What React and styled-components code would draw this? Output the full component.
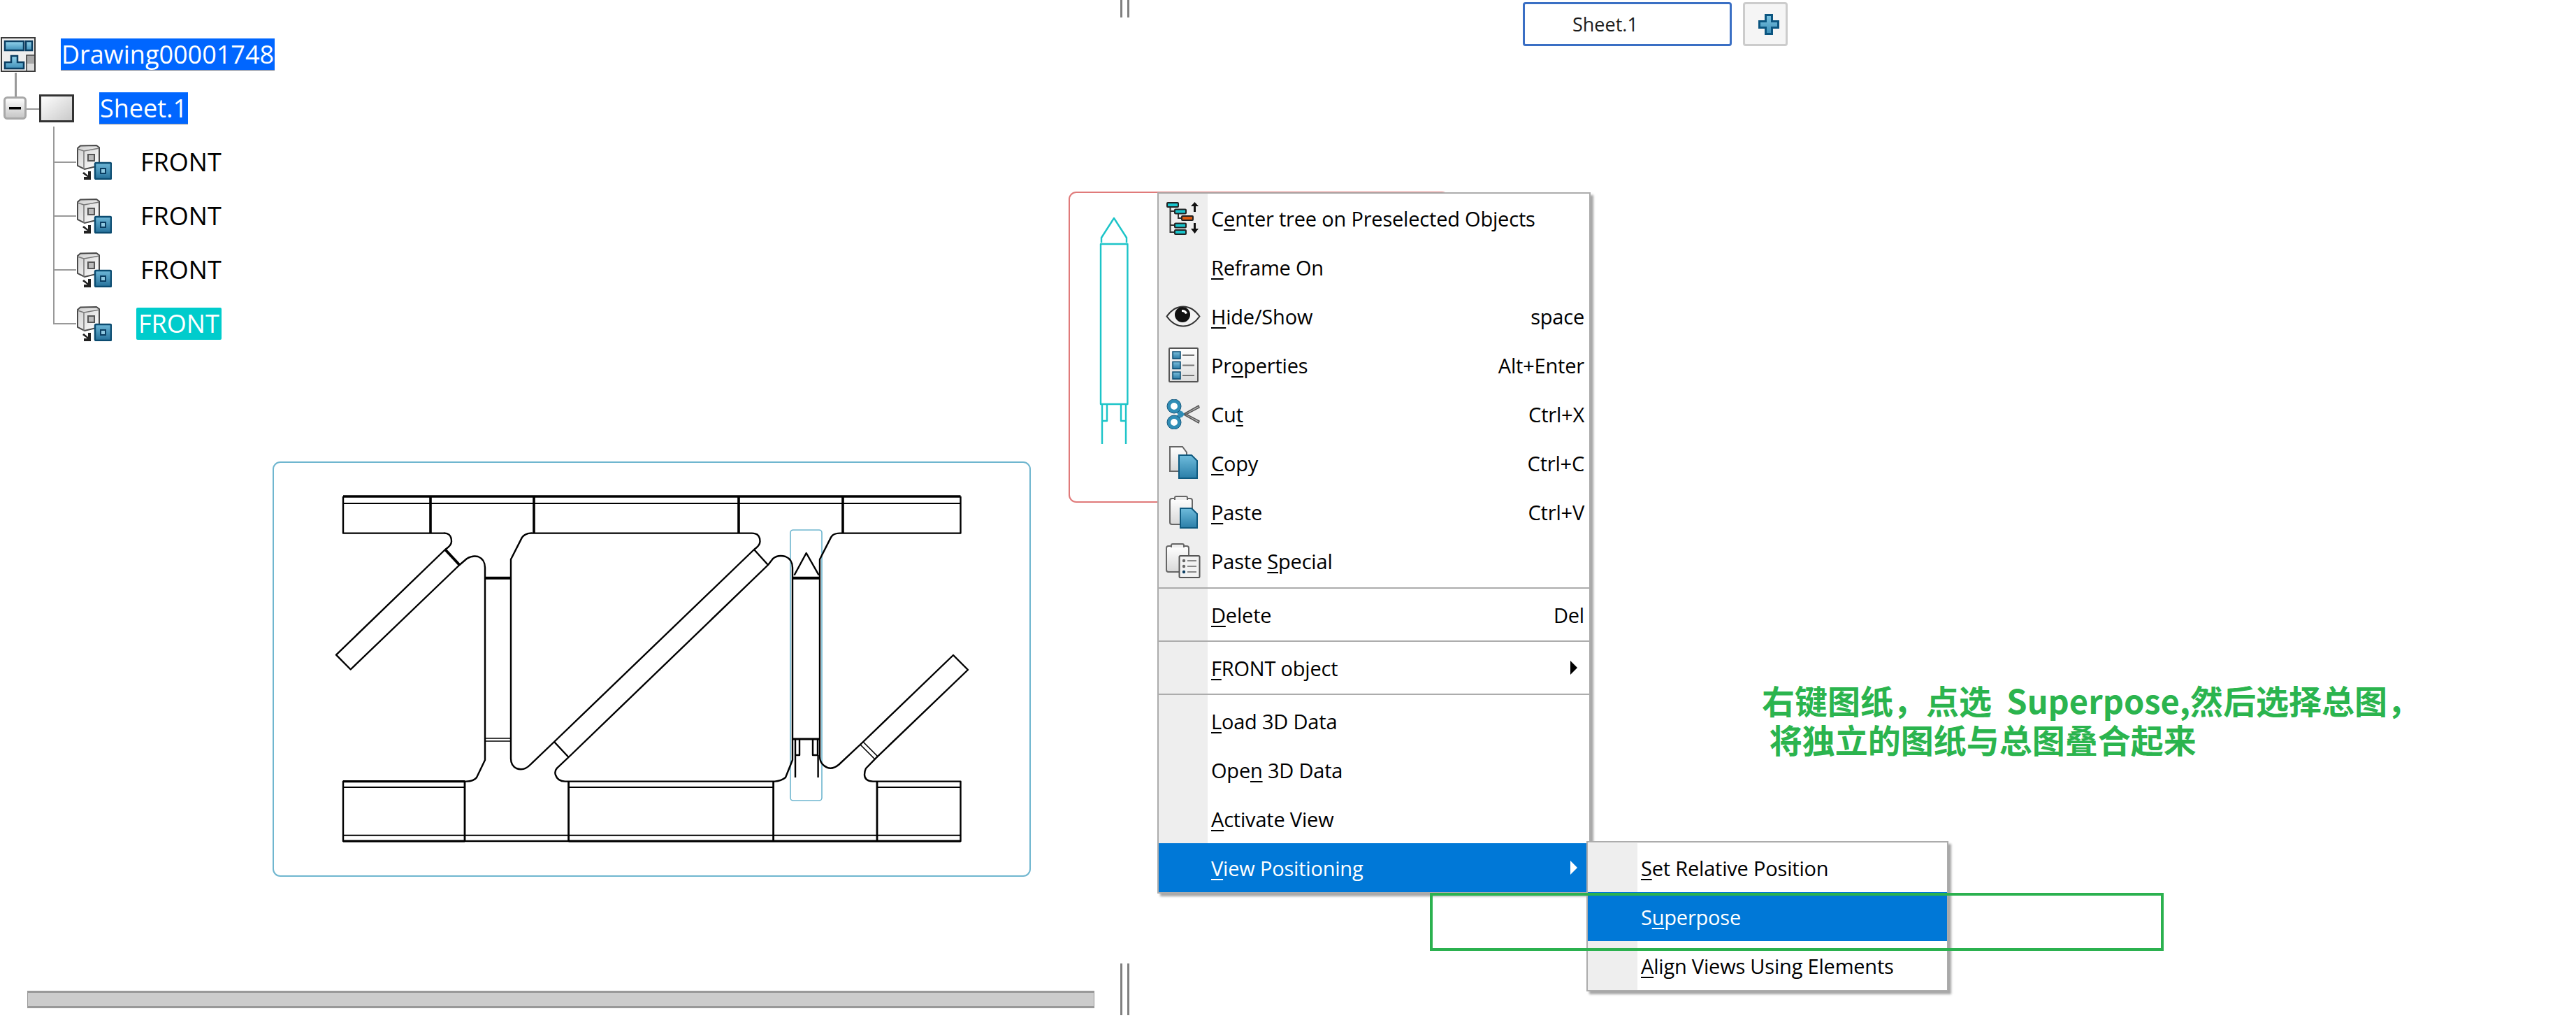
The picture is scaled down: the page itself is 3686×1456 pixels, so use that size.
import React from "react";
import styled, { createGlobalStyle } from "styled-components";

const Global = createGlobalStyle`
  html, body { margin: 0; padding: 0; background: #fff; }
  #root { width: 3686px; height: 1456px; }
`;

const Page = styled.div`
  position: relative;
  width: 3686px;
  height: 1456px;
  overflow: hidden;
  display: grid;
  grid-template-columns: 1603px 13px 1fr;
  font-family: "Open Sans", "Noto Sans", sans-serif;
  background: #fff;
  color: #000;
`;

const LeftPane = styled.section`
  display: flex;
  flex-direction: column;
  justify-content: space-between;
`;

const Tree = styled.div`
  position: relative;
  display: flex;
  flex-direction: column;
  padding-top: 39px;
`;

const TreeRow = styled.div`
  position: relative;
  display: flex;
  align-items: center;
  height: 77px;
  padding-left: ${(p) => p.$indent}px;
  gap: ${(p) => p.$gap}px;
`;

const Stem = styled.span`
  position: absolute;
  background: #999;
  left: ${(p) => p.$x}px;
  top: ${(p) => p.$y}px;
  width: ${(p) => p.$w}px;
  height: ${(p) => p.$h}px;
`;

const Label = styled.span`
  font-size: 36px;
  line-height: 46px;
  height: 46px;
  padding: 0 ${(p) => p.$pad || 1}px;
  white-space: nowrap;
  color: ${(p) => (p.$bg ? "#fff" : "#000")};
  background: ${(p) => p.$bg || "transparent"};
  border-radius: ${(p) => (p.$round ? "2px" : "0")};
  box-shadow: ${(p) => (p.$bg && !p.$round ? "inset 0 -1px 0 #8a8f9a" : "none")};
`;

const ScrollBar = styled.div`
  height: 19px;
  margin: 0 37px 14px 39px;
  background: #ccc;
  border-top: 3px solid #999;
  border-bottom: 3px solid #999;
  box-shadow: inset 1px 0 0 #999, inset -1px 0 0 #999;
`;

const Splitter = styled.div`
  display: flex;
  flex-direction: column;
  justify-content: space-between;
  padding-bottom: 4px;
`;

const Grip = styled.div`
  width: 13px;
  height: ${(p) => p.$h}px;
  box-sizing: border-box;
  border-left: 3px solid #808080;
  border-right: 3px solid #808080;
`;

const RightPane = styled.section`
  display: flex;
  align-items: flex-start;
  gap: 16px;
  padding: 3px 0 0 563px;
`;

const Tab = styled.div`
  box-sizing: border-box;
  width: 299px;
  height: 63px;
  border: 3px solid #3a6fc4;
  border-radius: 4px;
  padding-left: 68px;
  font-size: 27px;
  line-height: 57px;
  color: #1c1c1c;
`;

const AddButton = styled.div`
  box-sizing: border-box;
  width: 64px;
  height: 63px;
  border: 3px solid #ccc;
  border-radius: 4px;
  background: #f5f5f5;
  display: flex;
  align-items: center;
  justify-content: center;
  padding-left: 9px;
`;

const View = styled.div`
  position: absolute;
  box-sizing: border-box;
  left: ${(p) => p.$x}px;
  top: ${(p) => p.$y}px;
  width: ${(p) => p.$w}px;
  height: ${(p) => p.$h}px;
  border: 2px solid ${(p) => p.$color};
  border-radius: 11px;
  svg { position: absolute; left: -2px; top: -2px; display: block; }
`;

const Menu = styled.div`
  position: absolute;
  box-sizing: border-box;
  left: ${(p) => p.$x}px;
  top: ${(p) => p.$y}px;
  width: ${(p) => p.$w}px;
  padding-top: ${(p) => p.$pad}px;
  background: #fff;
  border: 2px solid #acacac;
  box-shadow: 4px 4px 3px rgba(0, 0, 0, 0.35);
  font-size: 29px;
`;

const Row = styled.div`
  display: grid;
  grid-template-columns: ${(p) => p.$gutter}px 1fr auto;
  height: 70px;
  align-items: stretch;
  color: ${(p) => (p.$active ? "#fff" : "#000")};
  background: ${(p) => (p.$active ? "#0078d7" : "transparent")};
`;

const Gutter = styled.span`
  display: flex;
  align-items: center;
  justify-content: center;
  background: ${(p) => (p.$active ? "transparent" : "#eee")};
`;

const RowText = styled.span`
  display: flex;
  align-items: center;
  padding-left: 5px;
  white-space: pre;
  letter-spacing: -0.2px;
  u { text-underline-offset: 4px; text-decoration-thickness: 2px; }
`;

const Shortcut = styled.span`
  display: flex;
  align-items: center;
  padding-right: 7px;
  letter-spacing: -0.2px;
`;

const Arrow = styled.span`
  align-self: center;
  margin-right: 17px;
  width: 0;
  height: 0;
  border-top: 10px solid transparent;
  border-bottom: 10px solid transparent;
  border-left: 10px solid ${(p) => (p.$active ? "#fff" : "#000")};
`;

const Separator = styled.div`
  position: relative;
  height: ${(p) => p.$h}px;
  background: linear-gradient(to right, #eee 70px, #fff 70px);
  &::after {
    content: "";
    position: absolute;
    left: 0;
    right: 0;
    top: ${(p) => p.$line}px;
    height: 2px;
    background: #acacac;
  }
`;

const Highlight = styled.div`
  position: absolute;
  left: 2046px;
  top: 1277px;
  width: 1042px;
  height: 75px;
  border: 4px solid #2bb14f;
  box-sizing: content-box;
`;

const Callout = styled.div`
  position: absolute;
  left: 2521px;
  top: 973px;
  font-family: "Noto Sans CJK SC", "Noto Sans", sans-serif;
  font-weight: 700;
  font-size: 47px;
  line-height: 56px;
  color: #2bb44e;
  white-space: pre;
`;

const Grad = ({ id, from, to, diag }) => (
  <linearGradient id={id} x1="0" y1="0" x2={diag ? "1" : "0"} y2="1">
    <stop offset="0" stopColor={from} />
    <stop offset="1" stopColor={to} />
  </linearGradient>
);

const DrawingIcon = () => (
  <svg width="50" height="50" viewBox="0 0 50 50">
    <defs>
      <Grad id="dBlue" from="#96d6ee" to="#3f8fb8" />
    </defs>
    <rect x="1" y="1" width="48" height="48" fill="#eeeeee" stroke="#3a3a3a" strokeWidth="2" />
    <rect x="6" y="6" width="27" height="13" fill="url(#dBlue)" stroke="#0b3e62" strokeWidth="2.5" />
    <rect x="36" y="6" width="9" height="13" fill="url(#dBlue)" stroke="#0b3e62" strokeWidth="2.5" />
    <path d="M15 27H24V36H33V45H6V36H15Z" fill="url(#dBlue)" stroke="#0b3e62" strokeWidth="2.5" />
    <rect x="37" y="27" width="11" height="11" fill="#a8a8a8" />
    <rect x="37" y="38" width="11" height="10" fill="#dcdcdc" />
    <path d="M37 48V26H48" fill="none" stroke="#333" strokeWidth="1.5" />
  </svg>
);

const SheetIcon = () => (
  <svg width="50" height="40" viewBox="0 0 50 40">
    <defs>
      <Grad id="sFill" from="#ffffff" to="#c8c8c8" diag />
    </defs>
    <rect x="1.5" y="1.5" width="47" height="37" fill="url(#sFill)" stroke="#333" strokeWidth="3" />
  </svg>
);

const ExpandIcon = () => (
  <svg width="33" height="33" viewBox="0 0 33 33">
    <defs>
      <Grad id="eFill" from="#ffffff" to="#c4c4c4" />
    </defs>
    <rect x="1.5" y="1.5" width="30" height="30" rx="4" fill="url(#eFill)" stroke="#a8a8a8" strokeWidth="3" />
    <rect x="8" y="15" width="17" height="3.5" fill="#000" />
  </svg>
);

const ViewIcon = () => (
  <svg width="50" height="50" viewBox="0 0 50 50">
    <defs>
      <Grad id="vBody" from="#cfcfcf" to="#ffffff" diag />
      <Grad id="vBlue" from="#6fb8d8" to="#25709a" />
    </defs>
    <path d="M1 5L5 1.5L28 1L32 4V30L11 35L1 30Z" fill="url(#vBody)" stroke="#4a4a4a" strokeWidth="2" />
    <path d="M1 6L10 9L32 5M10 9V35" fill="none" stroke="#777" strokeWidth="1.5" />
    <rect x="16" y="14" width="9" height="9" fill="#bbb" stroke="#555" strokeWidth="2" />
    <path d="M10 39L16 44V38H20V50H10V46H15L8 41Z" fill="#222" />
    <rect x="26" y="26" width="23" height="23" rx="1.5" fill="url(#vBlue)" stroke="#0b4b70" strokeWidth="2.5" />
    <rect x="34" y="34" width="7" height="7" fill="#8fc8e0" stroke="#0b3e62" strokeWidth="2" />
  </svg>
);

const NodeBox = ({ x, y, fill, w = 16, h = 6 }) => (
  <rect x={x} y={y} width={w} height={h} rx="1" fill={fill} stroke="#222" strokeWidth="2" />
);

const TreeIcon = () => (
  <svg width="48" height="48" viewBox="0 0 48 48">
    <path d="M5.5 8V44H12M5.5 14H12M5.5 34H12M17 18V24H22" fill="none" stroke="#333" strokeWidth="2" />
    <NodeBox x="1" y="2" fill="#18c4cc" />
    <NodeBox x="12" y="11.5" fill="#18c4cc" />
    <NodeBox x="22" y="21" fill="#dc5a10" />
    <NodeBox x="12" y="31.5" fill="#18c4cc" />
    <NodeBox x="12" y="41" fill="#18c4cc" />
    <path d="M40.5 1L46 7H42V15H39V7H35Z" fill="#111" />
    <path d="M40.5 46L46 39H42V31H39V39H35Z" fill="#111" />
  </svg>
);

const EyeIcon = () => (
  <svg width="50" height="31" viewBox="0 0 50 31">
    <path d="M1.5 15.5C9 5 17 1.5 25 1.5S41 5 48.5 15.5C41 26 33 29.5 25 29.5S9 26 1.5 15.5Z" fill="#f2f2f2" stroke="#333" strokeWidth="2" />
    <circle cx="24" cy="13" r="11" fill="#111" />
    <path d="M23 6A8 8 0 0 1 31 11L28 12A5 5 0 0 0 23 9Z" fill="#fff" />
  </svg>
);

const PropsIcon = () => (
  <svg width="43" height="50" viewBox="0 0 43 50">
    <defs>
      <Grad id="pFill" from="#ffffff" to="#dcdcdc" />
      <Grad id="pBlue" from="#7cc0de" to="#2a7aa4" />
    </defs>
    <rect x="1" y="1" width="41" height="48" rx="1" fill="url(#pFill)" stroke="#555" strokeWidth="2" />
    {[6, 20.5, 35].map((y) => (
      <g key={y}>
        <rect x="6" y={y} width="11" height="10" fill="url(#pBlue)" stroke="#0b4b70" strokeWidth="1.5" />
        <path d={`M20 ${y + 5}H37`} stroke="#777" strokeWidth="2" />
      </g>
    ))}
  </svg>
);

const ScissorsIcon = () => (
  <svg width="48" height="43" viewBox="0 0 48 43">
    <path d="M25 21L46 9L47 12L28 22Z" fill="#bbb" stroke="#555" strokeWidth="1.5" />
    <path d="M25 22L46 34L47 31L28 21Z" fill="#bbb" stroke="#555" strokeWidth="1.5" />
    <path d="M24 24L12 13M24 19L12 30" stroke="#2f8db6" strokeWidth="6" />
    <circle cx="11" cy="10" r="7.5" fill="#fff" stroke="#2f8db6" strokeWidth="5" />
    <circle cx="11" cy="33" r="7.5" fill="#fff" stroke="#2f8db6" strokeWidth="5" />
    <circle cx="11" cy="10" r="10" fill="none" stroke="#18587c" strokeWidth="1" />
    <circle cx="11" cy="33" r="10" fill="none" stroke="#18587c" strokeWidth="1" />
  </svg>
);

const BlueDoc = ({ x, y, w, h }) => (
  <path
    d={`M${x} ${y}H${x + w - 8}L${x + w} ${y + 8}V${y + h}H${x}Z`}
    fill="url(#docBlue)"
    stroke="#0f5a80"
    strokeWidth="2"
  />
);

const CopyIcon = () => (
  <svg width="41" height="48" viewBox="0 0 41 48">
    <defs>
      <Grad id="docBlue" from="#6fbcdc" to="#2a7ea8" />
      <Grad id="docGrey" from="#ffffff" to="#d8d8d8" />
    </defs>
    <path d="M1 1H19L25 9V36H1Z" fill="url(#docGrey)" stroke="#666" strokeWidth="2" />
    <BlueDoc x={14} y={13} w={26} h={33} />
  </svg>
);

const PasteIcon = () => (
  <svg width="41" height="47" viewBox="0 0 41 47">
    <defs>
      <Grad id="docGrey" from="#ffffff" to="#d8d8d8" />
    </defs>
    <rect x="1" y="4" width="32" height="37" rx="3" fill="url(#docGrey)" stroke="#666" strokeWidth="2" />
    <path d="M8 6V3Q8 1 10 1H24Q26 1 26 3V6" fill="#eee" stroke="#666" strokeWidth="2" />
    <BlueDoc x={16} y={18} w={24} h={28} />
  </svg>
);

const PasteSpecialIcon = () => (
  <svg width="50" height="50" viewBox="0 0 50 50">
    <defs>
      <Grad id="docGrey" from="#ffffff" to="#d8d8d8" />
    </defs>
    <rect x="1" y="4" width="32" height="37" rx="3" fill="url(#docGrey)" stroke="#666" strokeWidth="2" />
    <path d="M8 6V3Q8 1 10 1H24Q26 1 26 3V6" fill="#eee" stroke="#666" strokeWidth="2" />
    <rect x="19.5" y="18" width="29" height="31" rx="1.5" fill="#f2f2f2" stroke="#555" strokeWidth="2" />
    {[25, 33, 41].map((y, i) => (
      <g key={y}>
        <circle cx="26" cy={y} r="2.2" fill={i === 2 ? "#0b3e62" : "#666"} />
        <path d={`M31 ${y}H44`} stroke="#888" strokeWidth="2" />
      </g>
    ))}
  </svg>
);

const PlusIcon = () => (
  <svg width="30" height="30" viewBox="0 0 30 30">
    <defs>
      <Grad id="plusFill" from="#7cc4e2" to="#3d8fb8" />
    </defs>
    <path d="M10.5 1.5H19.5V10.5H28.5V19.5H19.5V28.5H10.5V19.5H1.5V10.5H10.5Z" fill="url(#plusFill)" stroke="#0b5580" strokeWidth="3" />
  </svg>
);

const TrussDrawing = () => (
  <svg width="1085" height="594" viewBox="390 660 1085 594" fill="none" stroke="#000" strokeWidth="2.4" strokeLinejoin="round">
    <rect x="1131" y="758" width="45" height="387" rx="4" stroke="#6fb6cf" strokeWidth="1.6" />
    <path d="M491 710V762.6H634.5Q646 762 646 774.5Q646 780 637 786L481 936.6L501.7 957.5L657.5 808L668 799Q676 794 684 796Q694 800 694 812V1087L682 1112Q678 1117.6 667 1117.6H491V1203H1374.5V1117.6H1249Q1237 1117 1237 1108Q1237 1103 1239 1099L1254 1083.6L1385 958L1364 937L1233 1063L1200.4 1093.5Q1189 1103 1179 1095Q1173 1090 1173 1082V800L1189 768.6Q1192 762.6 1202 762.6H1374.5V710" />
    <path d="M764 762.6H762Q752 762 747 768.6L731 800V1085Q731 1095 739 1099Q750 1103 759 1093.5L793 1061L1079 786Q1087.5 780 1087.5 774.5Q1087.5 762.6 1076 762.6H764" />
    <path d="M813.6 1083L797 1098.6Q793 1103 795 1108.5Q798 1117.6 808.6 1117.6H1108.5Q1118 1117 1124 1112L1134 1087V812Q1134 800 1124 796Q1113 793 1106 799L1099 808L813.6 1083" />
    <path d="M793 1061L813.6 1083M1079 786L1099 808" />
    <path d="M637 786L657.5 808" strokeWidth="4" />
    <path d="M1231 1065L1252 1086M1235 1061L1256 1082" strokeWidth="1.6" />
    <path d="M491 710H1374.5M616 710V762M764 710V762M1057 710V762M1206 710V762" strokeWidth="3.6" />
    <path d="M491 720H1374.5M491 1126H665M813.6 1126H1106.6M1255 1126H1374.5M491 1194.7H1374.5" strokeWidth="2" />
    <path d="M491 1117.6H665M491 1203H665M813.6 1203H1374.5" strokeWidth="3.2" />
    <path d="M665 1117V1203M813.6 1117V1203M1106.6 1117V1203M1255 1117V1203" strokeWidth="2.8" />
    <path d="M694 826.7H731M1135 826.7H1173" strokeWidth="4" />
    <path d="M694 1056H731M694 1060H731" strokeWidth="1.6" />
    <path d="M1136.5 822.7L1153.7 791L1171.7 822.7" />
    <path d="M1135 1057H1173" strokeWidth="3" />
    <path d="M1138 1057V1080H1144V1057M1170 1057V1080H1163V1057M1138 1080V1112M1170.6 1080V1112" />
  </svg>
);

const RocketDrawing = () => (
  <svg width="545" height="445" viewBox="1529 274 545 445" fill="none" stroke="#1cc4c8" strokeWidth="2.4" strokeLinejoin="round">
    <path d="M1576 347V340L1594 312L1612 340V347" />
    <rect x="1575" y="349" width="38.4" height="229" />
    <path d="M1577 578V635M1611 578V635M1584 578V602H1577M1604 578V602H1611" />
  </svg>
);

const mainMenu = [
  { icon: <TreeIcon />, parts: ["C", "e", "nter tree on Preselected Objects"] },
  { parts: ["", "R", "eframe On"] },
  { icon: <EyeIcon />, parts: ["", "H", "ide/Show"], key: "space" },
  { icon: <PropsIcon />, parts: ["Pr", "o", "perties"], key: "Alt+Enter" },
  { icon: <ScissorsIcon />, parts: ["Cu", "t", ""], key: "Ctrl+X" },
  { icon: <CopyIcon />, parts: ["", "C", "opy"], key: "Ctrl+C" },
  { icon: <PasteIcon />, parts: ["", "P", "aste"], key: "Ctrl+V" },
  { icon: <PasteSpecialIcon />, parts: ["Paste ", "S", "pecial"] },
  { sep: 7, line: 3 },
  { parts: ["", "D", "elete"], key: "Del" },
  { sep: 6, line: 2 },
  { parts: ["", "F", "RONT object"], arrow: true },
  { sep: 6, line: 2 },
  { parts: ["", "L", "oad 3D Data"] },
  { parts: ["Ope", "n", " 3D Data"] },
  { parts: ["", "A", "ctivate View"] },
  { parts: ["", "V", "iew Positioning"], arrow: true, active: true },
];

const subMenu = [
  { parts: ["", "S", "et Relative Position"] },
  { parts: ["S", "u", "perpose"], active: true },
  { parts: ["", "A", "lign Views Using Elements"] },
];

const MenuRows = ({ items, gutter }) =>
  items.map((it, i) =>
    it.sep ? (
      <Separator key={i} $h={it.sep} $line={it.line} />
    ) : (
      <Row key={i} $active={it.active} $gutter={gutter}>
        <Gutter $active={it.active}>{it.icon}</Gutter>
        <RowText>
          <span>
            {it.parts[0]}
            <u>{it.parts[1]}</u>
            {it.parts[2]}
          </span>
        </RowText>
        {it.key && <Shortcut>{it.key}</Shortcut>}
        {it.arrow && <Arrow $active={it.active} />}
      </Row>
    )
  );

const views = [0, 1, 2, 3];

export default function App() {
  return (
    <Page>
      <Global />
      <LeftPane>
        <Tree>
          <Stem $x={21} $y={104} $w={3} $h={36} />
          <Stem $x={38} $y={155} $w={18} $h={2} />
          <Stem $x={76} $y={181} $w={2} $h={283} />
          <TreeRow $indent={1} $gap={36}>
            <DrawingIcon />
            <Label $bg="#0066ff">Drawing00001748</Label>
          </TreeRow>
          <TreeRow $indent={5} $gap={18}>
            <ExpandIcon />
            <SheetIcon />
            <Label $bg="#0066ff" style={{ marginLeft: 18 }}>Sheet.1</Label>
          </TreeRow>
          {views.map((v) => (
            <TreeRow key={v} $indent={110} $gap={v === 3 ? 35 : 38}>
              <Stem $x={76} $y={38} $w={33} $h={2} />
              <ViewIcon />
              <Label $bg={v === 3 ? "#00cccc" : undefined} $pad={3} $round={v === 3}>FRONT</Label>
            </TreeRow>
          ))}
        </Tree>
        <ScrollBar />
      </LeftPane>
      <Splitter>
        <Grip $h={25} />
        <Grip $h={74} />
      </Splitter>
      <RightPane>
        <Tab>Sheet.1</Tab>
        <AddButton>
          <PlusIcon />
        </AddButton>
      </RightPane>

      <View $x={390} $y={660} $w={1085} $h={594} $color="#6fb6cf">
        <TrussDrawing />
      </View>
      <View $x={1529} $y={274} $w={545} $h={445} $color="#e07a7a">
        <RocketDrawing />
      </View>

      <Menu $x={1656} $y={275} $w={620} $pad={0}>
        <MenuRows items={mainMenu} gutter={70} />
      </Menu>
      <Menu $x={2270} $y={1203} $w={518} $pad={1}>
        <MenuRows items={subMenu} gutter={71} />
      </Menu>

      <Highlight />
      <Callout>{"右键图纸，点选  Superpose,然后选择总图，\n 将独立的图纸与总图叠合起来"}</Callout>
    </Page>
  );
}
